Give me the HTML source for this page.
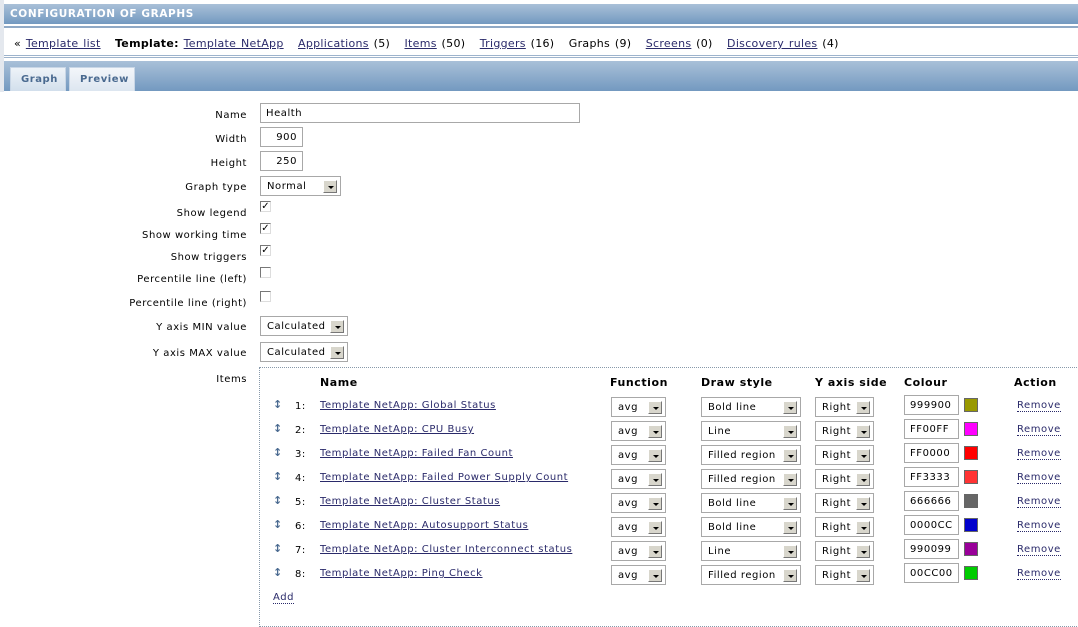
<!DOCTYPE html>
<html><head><style>
*{margin:0;padding:0;box-sizing:border-box}
body{width:1078px;height:616px;background:#fff;font-family:"DejaVu Sans","Liberation Sans",sans-serif;font-size:10px;color:#000;position:relative;overflow:hidden;letter-spacing:.55px}
.a{position:absolute;white-space:nowrap}
a,.lnk{color:#2a2a6a;text-decoration:underline}
.hdr{left:4px;top:4px;width:1074px;height:20px;background:linear-gradient(#a9c0d8,#7399c0);color:#fff;font-weight:bold;font-size:10.5px;padding:4px 6px;letter-spacing:.6px}
.nav{left:4px;top:26px;width:1074px;height:32px;border-top:2px solid #8fa9c6;border-bottom:3px double #9db3cc;padding:9px 10px;font-size:11px;letter-spacing:.3px;word-spacing:1px}
.tabs{left:4px;top:61px;width:1074px;height:30px;background:linear-gradient(#a9c0d8,#7399c0)}
.tab{position:absolute;top:6px;height:24px;background:linear-gradient(#f3f6fa,#dde6f0);color:#4a6a90;font-weight:bold;font-size:10px;padding:6px 10px;border:1px solid #c8d6e6;border-bottom:none}
.lbl{right:831px;text-align:right}
.inp{position:absolute;border:1px solid #a8a8a8;background:#fff;height:20px;padding:4px 5px 2px;font-size:10px}
.sel{position:absolute;border:1px solid #a8a8a8;background:#fff;height:20px;padding:4px 6px 2px;font-size:10px}
.sel i{position:absolute;right:3px;top:3px;width:14px;height:13px;background:#d8d6cc;border:1px solid;border-color:#fff #777 #777 #fff}
.sel i:after{content:"";position:absolute;left:4px;top:5px;border:3px solid transparent;border-top:3px solid #000;border-bottom:0}
.cb{position:absolute;width:11px;height:11px;border:1px solid;border-color:#777 #ddd #ddd #777;font-size:10px;line-height:9px;text-align:center;font-weight:bold;letter-spacing:0}
.th{font-weight:bold;font-size:11px}
.rm{color:#2a2a6a;border-bottom:1px dotted #2a2a6a}
.sw{position:absolute;width:14px;height:14px;border:1px solid #666}
</style></head><body>
<div style="position:absolute;left:0;top:0;width:4px;height:92px;background:#e4e8ee"></div>
<div class="a hdr">CONFIGURATION OF GRAPHS</div>
<div class="a nav">« <a>Template list</a> &nbsp; <b>Template:</b> <a>Template NetApp</a> &nbsp; <a>Applications</a> (5) &nbsp; <a>Items</a> (50) &nbsp; <a>Triggers</a> (16) &nbsp; Graphs (9) &nbsp; <a>Screens</a> (0) &nbsp; <a>Discovery rules</a> (4)</div>
<div class="a tabs">
<div class="tab" style="left:6px;width:56px;background:linear-gradient(#eef3f8,#d2dfec)">Graph</div>
<div class="tab" style="left:65px;width:66px">Preview</div>
</div>

<div class="a lbl" style="top:110px">Name</div>
<div class="inp" style="left:260px;top:103px;width:320px">Health</div>
<div class="a lbl" style="top:134px">Width</div>
<div class="inp" style="left:260px;top:127px;width:43px;text-align:right">900</div>
<div class="a lbl" style="top:158px">Height</div>
<div class="inp" style="left:260px;top:151px;width:43px;text-align:right">250</div>
<div class="a lbl" style="top:182px">Graph type</div>
<div class="sel" style="left:260px;top:176px;width:81px">Normal<i></i></div>
<div class="a lbl" style="top:208px">Show legend</div><div class="cb" style="left:260px;top:201px">✓</div>
<div class="a lbl" style="top:230px">Show working time</div><div class="cb" style="left:260px;top:223px">✓</div>
<div class="a lbl" style="top:252px">Show triggers</div><div class="cb" style="left:260px;top:245px">✓</div>
<div class="a lbl" style="top:274px">Percentile line (left)</div><div class="cb" style="left:260px;top:267px"></div>
<div class="a lbl" style="top:298px">Percentile line (right)</div><div class="cb" style="left:260px;top:291px"></div>
<div class="a lbl" style="top:322px">Y axis MIN value</div>
<div class="sel" style="left:260px;top:316px;width:88px">Calculated<i></i></div>
<div class="a lbl" style="top:348px">Y axis MAX value</div>
<div class="sel" style="left:260px;top:342px;width:88px">Calculated<i></i></div>
<div class="a lbl" style="top:374px">Items</div>

<div style="position:absolute;left:259px;top:367px;width:830px;height:260px;border:1px dotted #8899aa"></div>
<div class="a th" style="left:320px;top:376px">Name</div>
<div class="a th" style="left:610px;top:376px">Function</div>
<div class="a th" style="left:701px;top:376px">Draw style</div>
<div class="a th" style="left:815px;top:376px">Y axis side</div>
<div class="a th" style="left:904px;top:376px">Colour</div>
<div class="a th" style="left:1014px;top:376px">Action</div>

<div id="rows"></div>
<div class="a" style="left:273px;top:592px"><span class="rm">Add</span></div>
<script>
var d=[["Global Status","Bold line","999900","#999900"],["CPU Busy","Line","FF00FF","#FF00FF"],["Failed Fan Count","Filled region","FF0000","#FF0000"],["Failed Power Supply Count","Filled region","FF3333","#FF3333"],["Cluster Status","Bold line","666666","#666666"],["Autosupport Status","Bold line","0000CC","#0000CC"],["Cluster Interconnect status","Line","990099","#990099"],["Ping Check","Filled region","00CC00","#00CC00"]];
var h="";
d.forEach(function(r,i){var y=397+24*i;
h+='<div class="a" style="left:273px;top:'+(y+1)+'px;color:#4a6a90;font-weight:bold;font-size:11px">↕</div>';
h+='<div class="a" style="left:295px;top:'+(y+4)+'px">'+(i+1)+':</div>';
h+='<div class="a" style="left:320px;top:'+(y+3)+'px"><a>Template NetApp: '+r[0]+'</a></div>';
h+='<div class="sel" style="left:611px;top:'+y+'px;width:55px">avg<i></i></div>';
h+='<div class="sel" style="left:701px;top:'+y+'px;width:100px">'+r[1]+'<i></i></div>';
h+='<div class="sel" style="left:815px;top:'+y+'px;width:59px">Right<i></i></div>';
h+='<div class="inp" style="left:904px;top:'+(y-2)+'px;width:55px">'+r[2]+'</div>';
h+='<div class="sw" style="left:964px;top:'+(y+1)+'px;background:'+r[3]+'"></div>';
h+='<div class="a" style="left:1017px;top:'+(y+3)+'px"><span class="rm">Remove</span></div>';});
document.getElementById("rows").innerHTML=h;
</script>
</body></html>
